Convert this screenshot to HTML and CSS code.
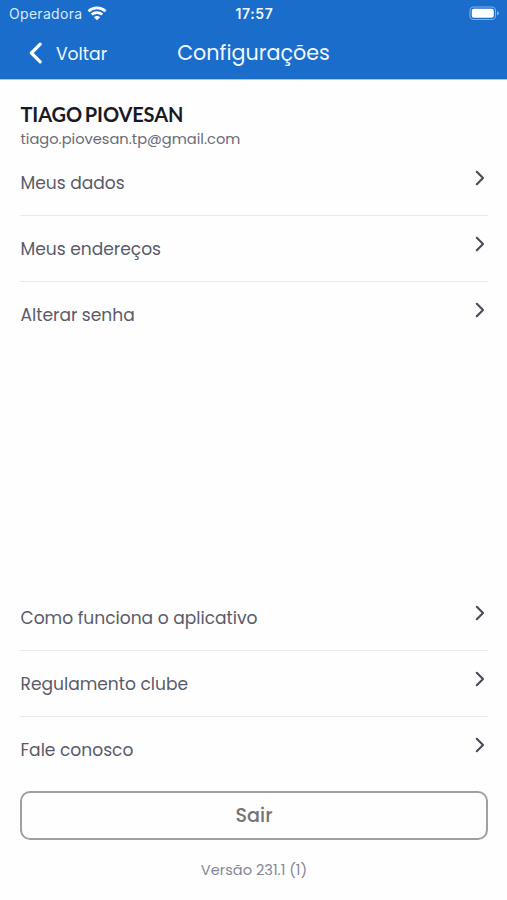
FILE: index.html
```html
<!DOCTYPE html>
<html lang="pt-BR">
<head>
<meta charset="utf-8">
<title>Configurações</title>
<link rel="stylesheet" href="styles.css">
</head>
<body>
<header class="header">
  <div class="status">
    <div class="carrier"><span class="carrier-name">Operadora</span>
      <svg class="wifi" width="20" height="15" viewBox="0 0 20 15" fill="none" stroke="#fff" stroke-width="2.7"><path d="M1.500 5.200C6.200.700 13.800.700 18.500 5.200"/><path d="M4.700 8.600C7.600 5.900 12.400 5.900 15.300 8.600"/><path d="M10 14.200 6.900 11.200C8.600 9.600 11.400 9.600 13.100 11.200Z" fill="#fff" stroke="none"/></svg>
    </div>
    <span class="clock">17:57</span>
    <svg class="battery" width="31" height="15" viewBox="0 0 31 15"><rect x="1" y="1" width="25.500" height="12.500" rx="3.600" fill="none" stroke="#84b1e5" stroke-width="1.100"/><rect x="2.800" y="2.800" width="22" height="9" rx="2" fill="#fff"/><path d="M28 5.200Q30 5.700 30 7.300T28 9.400Z" fill="#84b1e5"/></svg>
  </div>
  <nav class="nav">
    <a class="back"><svg width="14" height="22" viewBox="0 0 14 22" fill="none" stroke="#fff" stroke-width="3.2" stroke-linecap="round" stroke-linejoin="round"><path d="M12.200 2.200 3.400 11 12.200 19.800"/></svg><span class="back-label">Voltar</span></a>
    <h1 class="title">Configurações</h1>
  </nav>
</header>
<main class="content">
  <h2 class="name">TIAGO PIOVESAN</h2>
  <p class="email">tiago.piovesan.tp@gmail.com</p>
  <ul class="menu">
    <li class="item"><span>Meus dados</span><svg class="chevron" viewBox="0 0 10 16"><path d="M1.800 1.800 8 8 1.800 14.200"/></svg></li>
    <li class="item"><span>Meus endereços</span><svg class="chevron" viewBox="0 0 10 16"><path d="M1.800 1.800 8 8 1.800 14.200"/></svg></li>
    <li class="item"><span>Alterar senha</span><svg class="chevron" viewBox="0 0 10 16"><path d="M1.800 1.800 8 8 1.800 14.200"/></svg></li>
  </ul>
  <ul class="menu menu-bottom">
    <li class="item"><span>Como funciona o aplicativo</span><svg class="chevron" viewBox="0 0 10 16"><path d="M1.800 1.800 8 8 1.800 14.200"/></svg></li>
    <li class="item"><span>Regulamento clube</span><svg class="chevron" viewBox="0 0 10 16"><path d="M1.800 1.800 8 8 1.800 14.200"/></svg></li>
    <li class="item"><span>Fale conosco</span><svg class="chevron" viewBox="0 0 10 16"><path d="M1.800 1.800 8 8 1.800 14.200"/></svg></li>
  </ul>
  <button class="logout">Sair</button>
  <p class="version">Versão 231.1 (1)</p>
</main>
</body>
</html>
```
FILE: styles.css
```css
* { box-sizing: border-box; margin: 0; padding: 0; }
body {
  width: 507px; height: 900px; display: flex; flex-direction: column;
  background: #fefefe; color: #5a5b6a; overflow: hidden;
  font-family: Poppins, Inter, "Liberation Sans", sans-serif;
}
.header { height: 80px; background: #1a6dcb; color: #f2f8ff; flex: none; border-bottom: 1px solid #a4c8f0; background-clip: padding-box; }
.status {
  height: 27px; padding: 0 7px 0 9px; display: grid; grid-template-columns: 1fr auto 1fr;
  align-items: center; font-family: Inter, sans-serif; font-size: 14px; line-height: 27px;
}
.carrier { display: flex; align-items: center; gap: 5px; color: #d9e9fb; }
.carrier-name { letter-spacing: .3px; }
.clock { font-weight: 600; letter-spacing: .6px; }
.battery { justify-self: end; }
.nav { height: 52px; display: grid; grid-template-columns: 1fr auto 1fr; align-items: center; }
.back { display: flex; align-items: center; gap: 14px; padding-left: 28px; font-size: 17.200px; }
.back-label { padding-top: 2px; }
.title { font-size: 20.700px; font-weight: 400; line-height: 30px; margin-top: -1px; }
.content { flex: 1; display: flex; flex-direction: column; padding: 22px 19px 0 20px; }
.name { font: 700 20px/24px Lato, sans-serif; letter-spacing: -.13px; word-spacing: -1.800px; padding-left: .500px; color: #191a25; }
.email { font-size: 14.650px; line-height: 22px; margin-top: 2px; padding-left: .500px; color: #686b77; }
.menu { list-style: none; }
.item { height: 66px; display: flex; justify-content: space-between; align-items: flex-start; padding: 20px 3px 0 .500px; font-size: 17.080px; line-height: 26px; }
.item + .item { border-top: 1px solid #e8ebed; }
.item:first-child { height: 65px; }
.chevron { width: 10px; height: 16px; fill: none; stroke: #4b4a59; stroke-width: 2.100; stroke-linecap: round; stroke-linejoin: round; }
.menu-bottom { margin-top: 238px; }
.logout { height: 49px; flex: none; margin-top: 9px; border: 2px solid #a0a0a0; border-radius: 10px; background: transparent; color: #747474; font: 500 19.200px/28px Poppins, Inter, sans-serif; }
.version { margin-top: 18px; text-align: center; font-size: 14.600px; line-height: 24px; color: #858798; }
```
